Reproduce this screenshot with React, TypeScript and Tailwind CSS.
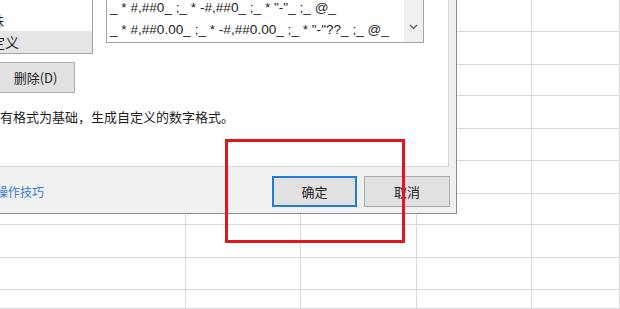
import React from 'react';

const cjk = { fontFamily: '"Noto Sans CJK SC", "Noto Sans", sans-serif' };
const latin = { fontFamily: '"Liberation Sans", "Noto Sans CJK SC", sans-serif' };

const rowHeights = [33, 34, 33, 34, 33, 34, 33, 34, 33, 20];
const colClasses = ['w-[186px]', 'w-[115px]', 'w-[116px]', 'w-[115px]', 'flex-1'];

function SheetGrid() {
  return (
    <div className="flex flex-col w-full h-full bg-white">
      {rowHeights.map((h, r) => (
        <div key={r} className="flex" style={{ height: h }}>
          {colClasses.map((c, i) => (
            <div key={i} className={`${c} border-r border-b border-[#d8d8e2]`} />
          ))}
        </div>
      ))}
    </div>
  );
}

function ChevronDown() {
  return (
    <svg width="9" height="6" viewBox="0 0 9 6" fill="none">
      <path d="M1 1l3.5 3.5L8 1" stroke="#606060" strokeWidth="1.3" />
    </svg>
  );
}

function FormatDialog() {
  return (
    <div className="absolute left-0 top-0 w-[457px] h-[214px] bg-[#f0f0f0] border-r border-b border-[#8a8a8a] flex flex-col">
      {/* tab page */}
      <div className="h-[167px] w-[449px] bg-white border-r border-b border-[#d9d9d9] overflow-hidden text-[#1e1e1e]">
        <div className="flex items-start gap-[13px] -mt-[14px]">
          {/* category list */}
          <div
            className="-ml-[20px] w-[113px] h-[68px] border border-[#a3a3a3] text-[14px] leading-[22px]"
            style={cjk}
          >
            <div className="h-[22px]" />
            <div className="h-[22px] whitespace-nowrap">
              <span className="-ml-[5px]">特殊</span>
            </div>
            <div className="h-[22px] bg-[#e5e5e5] whitespace-nowrap">
              <span className="-ml-[4px]">自定义</span>
            </div>
          </div>
          {/* type list */}
          <div className="w-[318px] h-[57px] border border-[#a3a3a3] flex">
            <div className="flex-1 pt-[10px] pl-[3px] text-[13.6px] leading-[22px] whitespace-pre overflow-hidden" style={latin}>
              <div className="h-[22px]">{'_ * #,##0_ ;_ * -#,##0_ ;_ * "-"_ ;_ @_'}</div>
              <div className="h-[22px]">{'_ * #,##0.00_ ;_ * -#,##0.00_ ;_ * "-"??_ ;_ @_'}</div>
            </div>
            <div className="w-[19px] bg-[#f0f0f0] flex flex-col items-center justify-end pb-[12px]">
              <ChevronDown />
            </div>
          </div>
        </div>

        <button
          className="mt-[8px] -ml-[10px] w-[85px] h-[31px] bg-[#e1e1e1] border border-[#adadad] text-[13px] text-[#1e1e1e] pl-[6px]"
          style={cjk}
        >
          删除(D)
        </button>

        <p className="mt-[15px] -ml-[26px] text-[13px] leading-[18px] whitespace-nowrap" style={cjk}>
          以现有格式为基础，生成自定义的数字格式。
        </p>
      </div>

      {/* footer */}
      <div className="flex-1 flex items-start pt-[9px] pr-[6px]">
        <a className="flex-1 -ml-[4px] text-[12px] leading-[31px] text-[#3b7dd3] whitespace-nowrap" style={cjk}>
          操作技巧
        </a>
        <div className="flex gap-[7px]">
          <button
            className="w-[85px] h-[31px] bg-[#e1e1e1] border-2 border-[#1f7bd6] text-[13px] text-[#1e1e1e]"
            style={cjk}
          >
            确定
          </button>
          <button
            className="w-[86px] h-[31px] bg-[#e1e1e1] border border-[#adadad] text-[13px] text-[#1e1e1e]"
            style={cjk}
          >
            取消
          </button>
        </div>
      </div>
    </div>
  );
}

export default function App() {
  return (
    <div className="relative w-[620px] h-[309px] overflow-hidden bg-white">
      <SheetGrid />
      <FormatDialog />
      {/* annotation box */}
      <div className="absolute left-[225px] top-[139px] w-[180px] h-[104px] border-[3px] border-[#e3161c]" />
    </div>
  );
}
